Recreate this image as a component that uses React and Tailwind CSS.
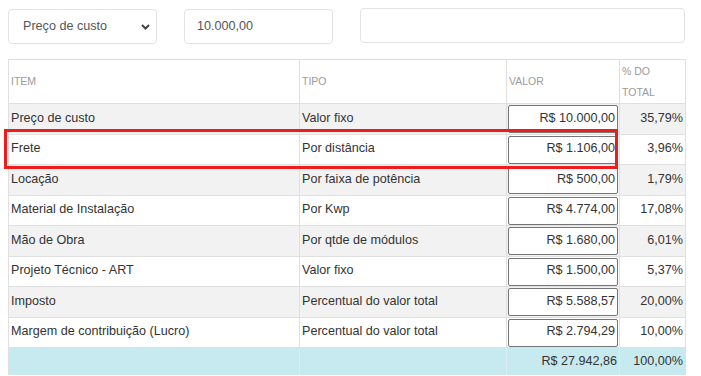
import React from "react";

const rows = [
  ["Preço de custo", "Valor fixo", "R$ 10.000,00", "35,79%"],
  ["Frete", "Por distância", "R$ 1.106,00", "3,96%"],
  ["Locação", "Por faixa de potência", "R$ 500,00", "1,79%"],
  ["Material de Instalação", "Por Kwp", "R$ 4.774,00", "17,08%"],
  ["Mão de Obra", "Por qtde de módulos", "R$ 1.680,00", "6,01%"],
  ["Projeto Técnico - ART", "Valor fixo", "R$ 1.500,00", "5,37%"],
  ["Imposto", "Percentual do valor total", "R$ 5.588,57", "20,00%"],
  ["Margem de contribuição (Lucro)", "Percentual do valor total", "R$ 2.794,29", "10,00%"],
];

export default function App() {
  return (
    <div
      className="relative w-[701px] h-[376px] bg-white text-[#333] text-[12.6px] overflow-hidden"
      style={{ fontFamily: '"Liberation Sans", Arial, sans-serif' }}
    >
      <div className="flex pl-[8px] pt-[8px]">
        <div className="mt-[1px] w-[149px] h-[35px] border border-[#e3e3e3] rounded-[4px] flex items-center justify-between pl-[14px] pr-[6px] text-[#555]">
          <span>Preço de custo</span>
          <svg width="9" height="6" viewBox="0 0 9 6">
            <polyline points="1,1 4.5,4.5 8,1" fill="none" stroke="#444" strokeWidth="2" />
          </svg>
        </div>
        <div className="ml-[27px] mt-[1px] w-[149px] h-[35px] border border-[#e3e3e3] rounded-[4px] flex items-center pl-[12px] text-[#555]">
          10.000,00
        </div>
        <div className="ml-[27px] w-[325px] h-[35px] border border-[#e3e3e3] rounded-[4px]" />
      </div>

      <div className="mt-[15px] ml-[8px] w-[678px] border-l border-t border-[#e0e0e0]">
        <div className="flex h-[44px] border-b border-[#e0e0e0] text-[10.5px] text-[#9a9a9a] uppercase leading-[21px]">
          <div className="w-[291px] border-r border-[#e0e0e0] flex items-center pl-[2px]">Item</div>
          <div className="w-[207px] border-r border-[#e0e0e0] flex items-center pl-[2px]">Tipo</div>
          <div className="w-[113px] border-r border-[#e0e0e0] flex items-center pl-[2px]">Valor</div>
          <div className="w-[66px] border-r border-[#e0e0e0] flex items-center pl-[2px]">% do<br />total</div>
        </div>
        {rows.map((r, i) => (
          <div
            key={i}
            className={`flex border-b border-[#e0e0e0] ${i % 2 === 0 ? "h-[31px] bg-[#f2f2f2]" : "h-[30px] bg-white"}`}
          >
            <div className="w-[291px] border-r border-[#e0e0e0] flex items-center pl-[2px] pb-[2px]">{r[0]}</div>
            <div className="w-[207px] border-r border-[#e0e0e0] flex items-center pl-[2px] pb-[2px]">{r[1]}</div>
            <div className="w-[113px] border-r border-[#e0e0e0] flex items-center pl-[1px]">
              <div className="w-[110px] h-[28px] border border-[#767676] rounded-[2px] bg-white flex items-center justify-end pr-[2px] pb-[2px]">
                {r[2]}
              </div>
            </div>
            <div className="w-[66px] border-r border-[#e0e0e0] flex items-center justify-end pr-[2px] pb-[2px]">{r[3]}</div>
          </div>
        ))}
        <div className="flex h-[27px] bg-[#c7eaf0]">
          <div className="w-[291px] border-r border-[#d8eef2]" />
          <div className="w-[207px] border-r border-[#d8eef2]" />
          <div className="w-[113px] border-r border-[#d8eef2] flex items-center justify-end pr-[2px]">R$ 27.942,86</div>
          <div className="w-[66px] border-r border-[#e0e0e0] flex items-center justify-end pr-[2px]">100,00%</div>
        </div>
      </div>

      <div className="absolute left-[4px] top-[129px] w-[614px] h-[40px] border-[3px] border-[#f01c1c]" />
    </div>
  );
}
